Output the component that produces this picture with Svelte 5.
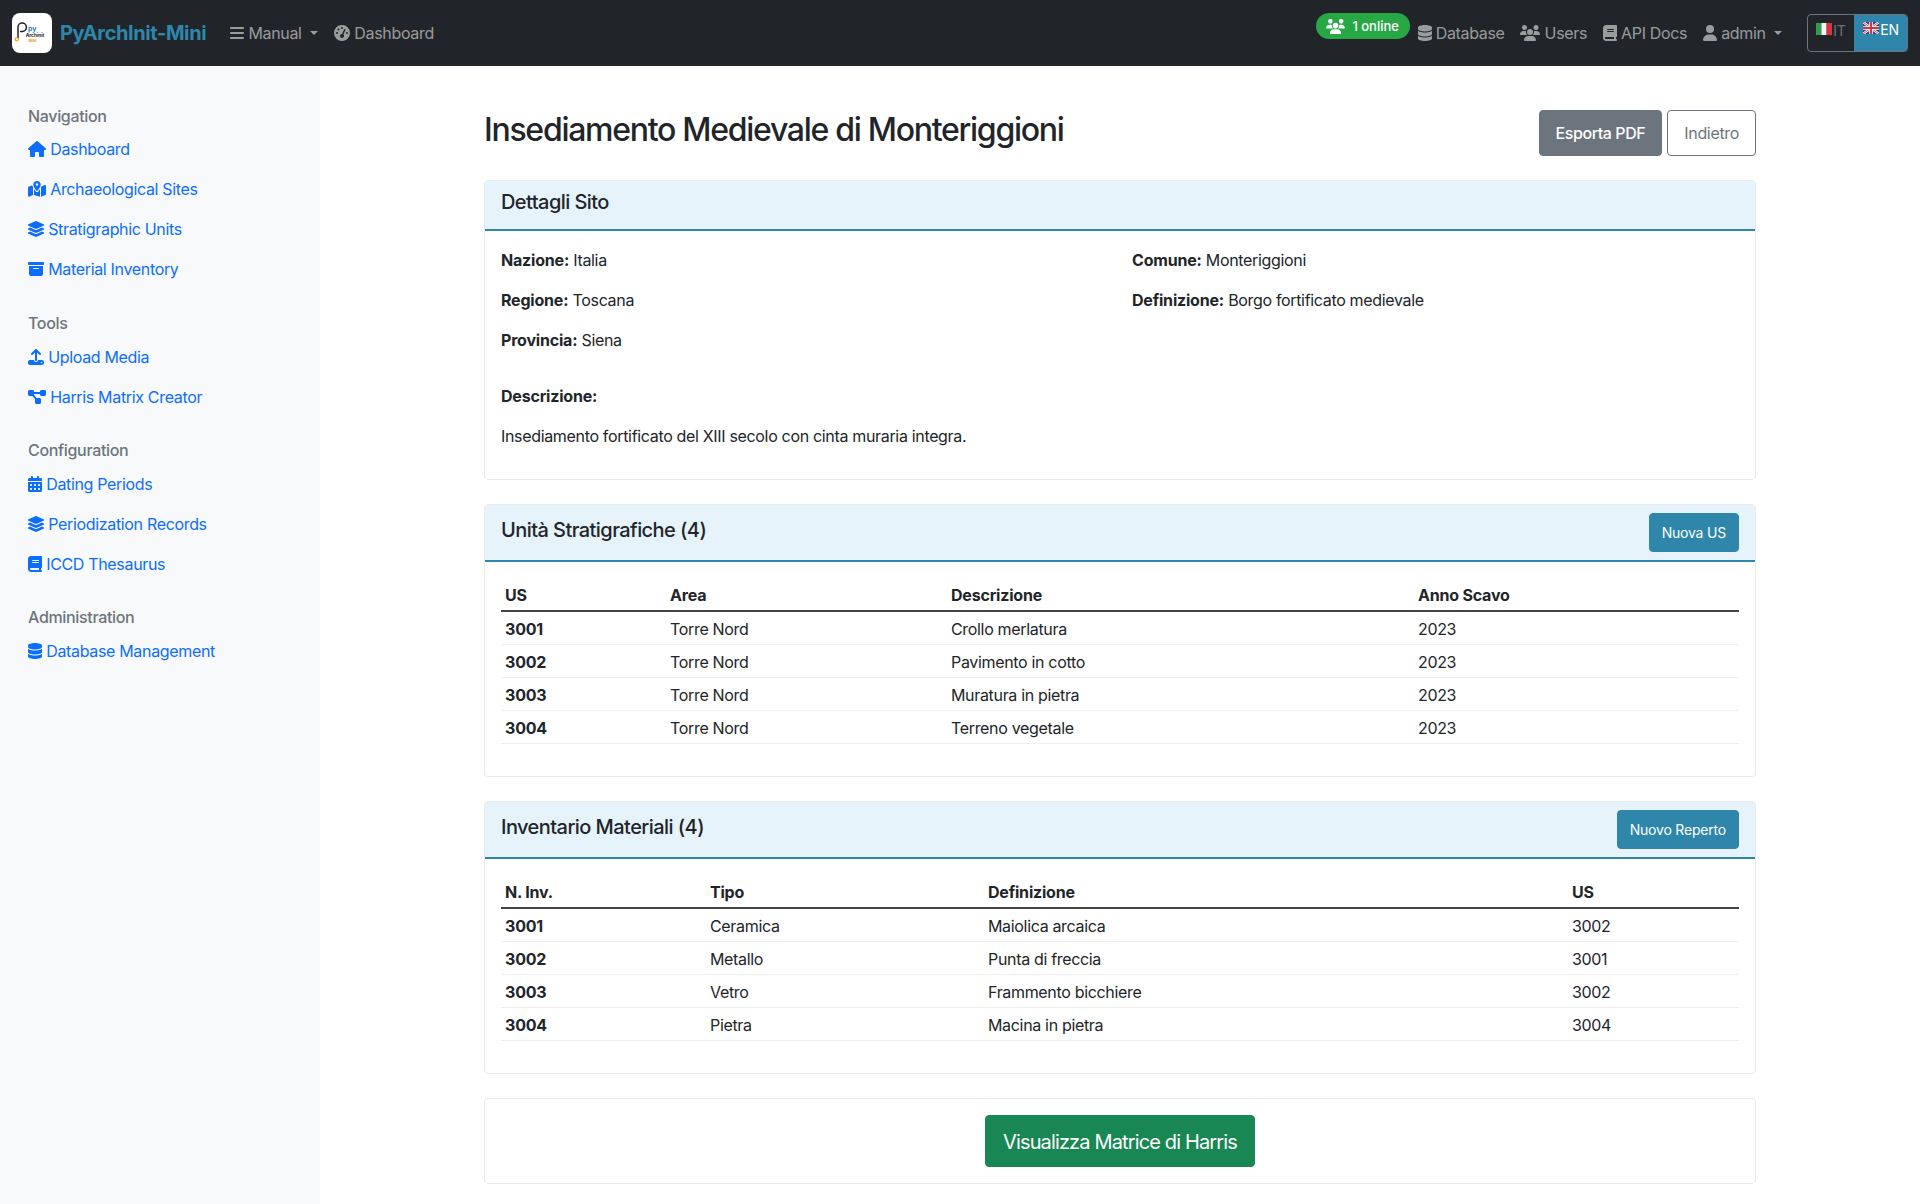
<script>
  const icons = {
    bars: [448, 'M0 96C0 78.3 14.3 64 32 64H416c17.7 0 32 14.3 32 32s-14.3 32-32 32H32C14.3 128 0 113.7 0 96zM0 256c0-17.7 14.3-32 32-32H416c17.7 0 32 14.3 32 32s-14.3 32-32 32H32c-17.7 0-32-14.3-32-32zM448 416c0 17.7-14.3 32-32 32H32c-17.7 0-32-14.3-32-32s14.3-32 32-32H416c17.7 0 32 14.3 32 32z'],
    gauge: [512, 'M0 256a256 256 0 1 1 512 0A256 256 0 1 1 0 256zM288 96a32 32 0 1 0 -64 0 32 32 0 1 0 64 0zM256 416c35.3 0 64-28.7 64-64c0-17.4-6.9-33.1-18.1-44.6L366 161.7c5.3-12.1-.2-26.3-12.3-31.6s-26.3 .2-31.6 12.3L257.9 288c-.6 0-1.3 0-1.9 0c-35.3 0-64 28.7-64 64s28.7 64 64 64zM176 144a32 32 0 1 0 -64 0 32 32 0 1 0 64 0zM96 288a32 32 0 1 0 0-64 32 32 0 1 0 0 64zm352-32a32 32 0 1 0 -64 0 32 32 0 1 0 64 0z'],
    house: [576, 'M575.8 255.5c0 18-15 32.1-32 32.1h-32l.7 160.2c0 2.7-.2 5.4-.5 8.1V472c0 22.1-17.9 40-40 40H456c-1.1 0-2.2 0-3.3-.1c-1.4 .1-2.8 .1-4.2 .1H416 392c-22.1 0-40-17.9-40-40V448 384c0-17.7-14.3-32-32-32H256c-17.7 0-32 14.3-32 32v64 24c0 22.1-17.9 40-40 40H160 128.1c-1.5 0-3-.1-4.5-.2c-1.2 .1-2.4 .2-3.6 .2H104c-22.1 0-40-17.9-40-40V360c0-.9 0-1.9 .1-2.8V287.6H32c-18 0-32-14-32-32.1c0-9 3-17 10-24L266.4 8c7-7 15-8 22-8s15 2 21 7L564.8 231.5c8 7 12 15 11 24z'],
    map: [576, 'M408 120c0 54.6-73.1 151.9-105.2 192c-7.7 9.6-22 9.6-29.6 0C241.1 271.9 168 174.6 168 120C168 53.7 221.7 0 288 0s120 53.7 120 120zm8 80.4c3.5-6.9 6.7-13.8 9.6-20.6c.5-1.2 1-2.5 1.5-3.7l116-46.4C558.9 123.4 576 135 576 152V422.8c0 9.8-6 18.6-15.1 22.3L416 503V200.4zM137.6 138.3c2.4 14.1 7.2 28.3 12.8 41.5c2.9 6.8 6.1 13.7 9.6 20.6V451.8L32.9 502.7C17.1 509 0 497.4 0 480.4V209.6c0-9.8 6-18.6 15.1-22.3l122.6-49zM327.8 332c13.9-17.4 35.7-45.7 56.2-77V504.3L192 449.4V255c20.5 31.3 42.3 59.6 56.2 77c20.5 25.6 59.1 25.6 79.6 0zM288 152a40 40 0 1 0 0-80 40 40 0 1 0 0 80z'],
    layers: [512, 'M264.5 5.2c14.9-6.9 32.1-6.9 47 0l218.6 101c8.5 3.9 13.9 12.4 13.9 21.8s-5.4 17.9-13.9 21.8l-218.6 101c-14.9 6.9-32.1 6.9-47 0L45.9 149.8C37.4 145.8 32 137.3 32 128s5.4-17.9 13.9-21.8L264.5 5.2zM476.9 209.6l53.2 24.6c8.5 3.9 13.9 12.4 13.9 21.8s-5.4 17.9-13.9 21.8l-218.6 101c-14.9 6.9-32.1 6.9-47 0L45.9 277.8C37.4 273.8 32 265.3 32 256s5.4-17.9 13.9-21.8l53.2-24.6 152 70.2c23.4 10.8 50.4 10.8 73.8 0l152-70.2zm-152 198.2l152-70.2 53.2 24.6c8.5 3.9 13.9 12.4 13.9 21.8s-5.4 17.9-13.9 21.8l-218.6 101c-14.9 6.9-32.1 6.9-47 0L45.9 405.8C37.4 401.8 32 393.3 32 384s5.4-17.9 13.9-21.8l53.2-24.6 152 70.2c23.4 10.8 50.4 10.8 73.8 0z', 32],
    archive: [512, 'M32 32H480c17.7 0 32 14.3 32 32V96c0 17.7-14.3 32-32 32H32C14.3 128 0 113.7 0 96V64C0 46.3 14.3 32 32 32zm0 128H480V416c0 35.3-28.7 64-64 64H96c-35.3 0-64-28.7-64-64V160zm128 80c0 8.8 7.2 16 16 16H336c8.8 0 16-7.2 16-16s-7.2-16-16-16H176c-8.8 0-16 7.2-16 16z'],
    upload: [512, 'M288 109.3V352c0 17.7-14.3 32-32 32s-32-14.3-32-32V109.3l-73.4 73.4c-12.5 12.5-32.8 12.5-45.3 0s-12.5-32.8 0-45.3l128-128c12.5-12.5 32.8-12.5 45.3 0l128 128c12.5 12.5 12.5 32.8 0 45.3s-32.8 12.5-45.3 0L288 109.3zM64 352H192c0 35.3 28.7 64 64 64s64-28.7 64-64H448c35.3 0 64 28.7 64 64v32c0 35.3-28.7 64-64 64H64c-35.3 0-64-28.7-64-64V416c0-35.3 28.7-64 64-64zM432 456a24 24 0 1 0 0-48 24 24 0 1 0 0 48z'],
    diagram: [576, 'M0 80C0 53.5 21.5 32 48 32h96c26.5 0 48 21.5 48 48V96H384V80c0-26.5 21.5-48 48-48h96c26.5 0 48 21.5 48 48v96c0 26.5-21.5 48-48 48H432c-26.5 0-48-21.5-48-48V160H192v16c0 1.7-.1 3.4-.3 5L272 288h96c26.5 0 48 21.5 48 48v96c0 26.5-21.5 48-48 48H272c-26.5 0-48-21.5-48-48V336c0-1.7 .1-3.4 .3-5L144 224H48c-26.5 0-48-21.5-48-48V80z'],
    calendar: [448, 'M128 0c17.7 0 32 14.3 32 32V64H288V32c0-17.7 14.3-32 32-32s32 14.3 32 32V64h48c26.5 0 48 21.5 48 48v48H0V112C0 85.5 21.5 64 48 64H96V32c0-17.7 14.3-32 32-32zM0 192H448V464c0 26.5-21.5 48-48 48H48c-26.5 0-48-21.5-48-48V192zm64 80v32c0 8.8 7.2 16 16 16h32c8.8 0 16-7.2 16-16V272c0-8.8-7.2-16-16-16H80c-8.8 0-16 7.2-16 16zm128 0v32c0 8.8 7.2 16 16 16h32c8.8 0 16-7.2 16-16V272c0-8.8-7.2-16-16-16H208c-8.8 0-16 7.2-16 16zm144-16c-8.8 0-16 7.2-16 16v32c0 8.8 7.2 16 16 16h32c8.8 0 16-7.2 16-16V272c0-8.8-7.2-16-16-16H336zM64 400v32c0 8.8 7.2 16 16 16h32c8.8 0 16-7.2 16-16V400c0-8.8-7.2-16-16-16H80c-8.8 0-16 7.2-16 16zm144-16c-8.8 0-16 7.2-16 16v32c0 8.8 7.2 16 16 16h32c8.8 0 16-7.2 16-16V400c0-8.8-7.2-16-16-16H208zm112 16v32c0 8.8 7.2 16 16 16h32c8.8 0 16-7.2 16-16V400c0-8.8-7.2-16-16-16H336c-8.8 0-16 7.2-16 16z'],
    book: [448, 'M96 0C43 0 0 43 0 96V416c0 53 43 96 96 96H384h32c17.7 0 32-14.3 32-32s-14.3-32-32-32V384c17.7 0 32-14.3 32-32V32c0-17.7-14.3-32-32-32H384 96zm0 384H352v64H96c-17.7 0-32-14.3-32-32s14.3-32 32-32zm32-240c0-8.8 7.2-16 16-16H336c8.8 0 16 7.2 16 16s-7.2 16-16 16H144c-8.8 0-16-7.2-16-16zm16 48H336c8.8 0 16 7.2 16 16s-7.2 16-16 16H144c-8.8 0-16-7.2-16-16s7.2-16 16-16z'],
    database: [448, 'M448 80v48c0 44.2-100.3 80-224 80S0 172.2 0 128V80C0 35.8 100.3 0 224 0S448 35.8 448 80zM393.2 214.7c20.8-7.4 39.9-16.9 54.8-28.6V288c0 44.2-100.3 80-224 80S0 332.2 0 288V186.1c14.9 11.8 34 21.2 54.8 28.6C99.7 230.7 159.5 240 224 240s124.3-9.3 169.2-25.3zM0 346.1c14.9 11.8 34 21.2 54.8 28.6C99.7 390.7 159.5 400 224 400s124.3-9.3 169.2-25.3c20.8-7.4 39.9-16.9 54.8-28.6V432c0 44.2-100.3 80-224 80S0 476.2 0 432V346.1z'],
    users: [640, 'M144 0a80 80 0 1 1 0 160A80 80 0 1 1 144 0zM512 0a80 80 0 1 1 0 160A80 80 0 1 1 512 0zM0 298.7C0 239.8 47.8 192 106.7 192h42.7c15.9 0 31 3.5 44.6 9.7c-1.3 7.2-1.9 14.7-1.9 22.3c0 38.2 16.8 72.5 43.3 96c-.2 0-.4 0-.7 0H21.3C9.6 320 0 310.4 0 298.7zM405.3 320c-.2 0-.4 0-.7 0c26.6-23.5 43.3-57.8 43.3-96c0-7.6-.7-15-1.9-22.3c13.6-6.3 28.7-9.7 44.6-9.7h42.7C592.2 192 640 239.8 640 298.7c0 11.8-9.6 21.3-21.3 21.3H405.3zM224 224a96 96 0 1 1 192 0 96 96 0 1 1 -192 0zM128 485.3C128 411.7 187.7 352 261.3 352H378.7C452.3 352 512 411.7 512 485.3c0 14.7-11.9 26.7-26.7 26.7H154.7c-14.7 0-26.7-11.9-26.7-26.7z'],
    user: [448, 'M224 256A128 128 0 1 0 224 0a128 128 0 1 0 0 256zm-45.7 48C79.8 304 0 383.8 0 482.3C0 498.7 13.3 512 29.7 512H418.3c16.4 0 29.7-13.3 29.7-29.7C448 383.8 368.2 304 269.7 304H178.3z']
  };

  const sideNav = [
    { title: 'Navigation', links: [['house', 'Dashboard'], ['map', 'Archaeological Sites'], ['layers', 'Stratigraphic Units'], ['archive', 'Material Inventory']] },
    { title: 'Tools', links: [['upload', 'Upload Media'], ['diagram', 'Harris Matrix Creator']] },
    { title: 'Configuration', links: [['calendar', 'Dating Periods'], ['layers', 'Periodization Records'], ['book', 'ICCD Thesaurus']] },
    { title: 'Administration', links: [['database', 'Database Management']] }
  ];

  const usRows = [
    ['3001', 'Torre Nord', 'Crollo merlatura', '2023'],
    ['3002', 'Torre Nord', 'Pavimento in cotto', '2023'],
    ['3003', 'Torre Nord', 'Muratura in pietra', '2023'],
    ['3004', 'Torre Nord', 'Terreno vegetale', '2023']
  ];
  const invRows = [
    ['3001', 'Ceramica', 'Maiolica arcaica', '3002'],
    ['3002', 'Metallo', 'Punta di freccia', '3001'],
    ['3003', 'Vetro', 'Frammento bicchiere', '3002'],
    ['3004', 'Pietra', 'Macina in pietra', '3004']
  ];
</script>

{#snippet icon(name)}
  <svg class="fa" viewBox="{icons[name][2] ?? 0} 0 {icons[name][0]} 512" width={icons[name][0] / 32} height="16" aria-hidden="true"><path fill="currentColor" d={icons[name][1]} /></svg>
{/snippet}

{#snippet table(kind, head, rows)}
  <table class="table {kind}">
    <colgroup><col class="c1" /><col class="c2" /><col class="c3" /><col class="c4" /></colgroup>
    <thead><tr>{#each head as h}<th>{h}</th>{/each}</tr></thead>
    <tbody>
      {#each rows as r}
        <tr><td><strong>{r[0]}</strong></td><td>{r[1]}</td><td>{r[2]}</td><td>{r[3]}</td></tr>
      {/each}
    </tbody>
  </table>
{/snippet}

<nav class="navbar">
  <a class="brand" href="#top">
    <span class="logo">
      <svg viewBox="0 0 40 40" width="40" height="40" aria-hidden="true">
        <path d="M6 25V14.2a4.2 4.2 0 0 1 8.4 0a4.2 4.2 0 0 1-4.2 4.2H8" fill="none" stroke="#222" stroke-width="1.5" />
        <circle cx="4.8" cy="26.3" r="1.6" fill="none" stroke="#f39c12" stroke-width="1.1" />
        <text x="16" y="18" class="l-py">py</text>
        <text x="13.7" y="24" class="l-arch">Archinit</text>
        <text x="16.5" y="28.5" class="l-mini">MINI</text>
      </svg>
    </span>
    <span class="brand-text">PyArchInit-Mini</span>
  </a>
  <div class="nav-left">
    <a class="nav-link" href="#top">{@render icon('bars')} Manual<span class="caret"></span></a>
    <a class="nav-link" href="#top">{@render icon('gauge')} Dashboard</a>
  </div>
  <div class="nav-right">
    <span class="badge">{@render icon('users')}<span>1 online</span></span>
    <a class="nav-link" href="#top">{@render icon('database')} Database</a>
    <a class="nav-link" href="#top">{@render icon('users')} Users</a>
    <a class="nav-link" href="#top">{@render icon('book')} API Docs</a>
    <a class="nav-link" href="#top">{@render icon('user')} admin<span class="caret"></span></a>
    <div class="lang">
      <a class="lang-btn" href="#top">
        <svg class="flag" viewBox="0 0 16 12" width="16" height="12" aria-hidden="true"><rect width="5.4" height="12" fill="#2f9e4f" /><rect x="5.4" width="5.2" height="12" fill="#f4f4f4" /><rect x="10.6" width="5.4" height="12" fill="#d8343f" /></svg>IT
      </a>
      <a class="lang-btn active" href="#top">
        <svg class="flag" viewBox="0 0 16 12" width="16" height="12" aria-hidden="true"><rect width="16" height="12" fill="#27408f" /><path d="M0 0L16 12M16 0L0 12" stroke="#fff" stroke-width="2.4" /><path d="M0 0L16 12M16 0L0 12" stroke="#d8343f" stroke-width=".9" /><path d="M8 0V12M0 6H16" stroke="#fff" stroke-width="3.6" /><path d="M8 0V12M0 6H16" stroke="#d8343f" stroke-width="2" /></svg>EN
      </a>
    </div>
  </div>
</nav>

<div class="layout">
  <aside class="sidebar">
    {#each sideNav as group}
      <section class="side-group">
        <h6>{group.title}</h6>
        {#each group.links as [ic, label]}
          <a class="side-link" href="#top">{@render icon(ic)} {label}</a>
        {/each}
      </section>
    {/each}
  </aside>

  <main class="main">
    <div class="page-head">
      <h1>Insediamento Medievale di Monteriggioni</h1>
      <div class="head-actions">
        <a class="btn btn-secondary" href="#top">Esporta PDF</a>
        <a class="btn btn-outline" href="#top">Indietro</a>
      </div>
    </div>

    <div class="card">
      <div class="card-header"><h5>Dettagli Sito</h5></div>
      <div class="card-body">
        <div class="details">
          <div>
            <p><strong>Nazione:</strong> Italia</p>
            <p><strong>Regione:</strong> Toscana</p>
            <p><strong>Provincia:</strong> Siena</p>
          </div>
          <div>
            <p><strong>Comune:</strong> Monteriggioni</p>
            <p><strong>Definizione:</strong> Borgo fortificato medievale</p>
          </div>
        </div>
        <div class="description">
          <p><strong>Descrizione:</strong></p>
          <p>Insediamento fortificato del XIII secolo con cinta muraria integra.</p>
        </div>
      </div>
    </div>

    <div class="card">
      <div class="card-header with-action">
        <h5>Unità Stratigrafiche (4)</h5>
        <a class="btn-sm" href="#top">Nuova US</a>
      </div>
      <div class="card-body">
        {@render table('us', ['US', 'Area', 'Descrizione', 'Anno Scavo'], usRows)}
      </div>
    </div>

    <div class="card">
      <div class="card-header with-action">
        <h5>Inventario Materiali (4)</h5>
        <a class="btn-sm" href="#top">Nuovo Reperto</a>
      </div>
      <div class="card-body">
        {@render table('inv', ['N. Inv.', 'Tipo', 'Definizione', 'US'], invRows)}
      </div>
    </div>

    <div class="card last">
      <div class="card-body center">
        <a class="btn-lg" href="#top">Visualizza Matrice di Harris</a>
      </div>
    </div>
  </main>
</div>

<style>
  :global(body) { margin: 0; font-family: Inter, "Liberation Sans", sans-serif; font-size: 16px; line-height: 1.5; letter-spacing: -0.33px; color: #212529; background: #fff; }
  a { text-decoration: none; }
  strong { letter-spacing: -0.2px; }
  .fa { vertical-align: -0.125em; display: inline-block; }

  .navbar { height: 66px; box-sizing: border-box; background: #212529; display: flex; align-items: center; padding: 0 12px; }
  .brand { display: flex; align-items: center; margin-right: 16px; }
  .logo { width: 40px; height: 40px; background: #fff; border-radius: 8px; margin-right: 8px; display: block; overflow: hidden; }
  .logo svg { display: block; }
  .l-py { font: 700 7px Inter, sans-serif; fill: #2e86ab; letter-spacing: 0; }
  .l-arch { font: 700 4.8px Inter, sans-serif; fill: #222; letter-spacing: 0; }
  .l-mini { font: 700 3.6px Inter, sans-serif; fill: #f39c12; letter-spacing: 0; }
  .brand-text { font-size: 20px; font-weight: 700; color: #2e86ab; line-height: 30px; letter-spacing: -0.4px; }
  .nav-left { display: flex; }
  .nav-right { display: flex; align-items: center; margin-left: auto; }
  .nav-link { color: rgba(255, 255, 255, 0.55); padding: 8px; line-height: 24px; display: block; white-space: nowrap; }
  .nav-right .nav-link { letter-spacing: -0.36px; }
  .caret { display: inline-block; margin-left: 8.5px; vertical-align: 0.255em; border-top: 0.3em solid; border-right: 0.3em solid transparent; border-left: 0.3em solid transparent; }
  .badge { background: #28a745; color: #fff; border-radius: 13px; height: 26px; box-sizing: border-box; width: 94px; margin-bottom: 14px; padding-top: 1px; display: flex; align-items: center; justify-content: center; gap: 7px; font-size: 13px; font-weight: 500; letter-spacing: 0; }
  .badge .fa { width: 19px; height: 15px; }
  .lang { display: flex; margin-left: 17px; height: 38px; box-sizing: border-box; border: 1px solid #6c757d; border-radius: 4px; overflow: hidden; }
  .lang-btn { width: 46px; color: #6c757d; font-size: 14px; line-height: 21px; padding-top: 5px; display: flex; align-items: flex-start; justify-content: center; box-sizing: border-box; letter-spacing: -0.2px; }
  .lang-btn.active { width: 54px; margin: -1px -1px -1px 0; height: 38px; background: #2e86ab; color: #fff; }
  .flag { margin: 3px 1px 0 0; }

  .layout { display: flex; min-height: 1138px; }
  .sidebar { width: 320px; flex: none; background: #f8f9fa; padding: 41px 28px 0; box-sizing: border-box; }
  .side-group { margin-bottom: 24px; }
  .side-group:first-child { margin-bottom: 25px; }
  .side-group:first-child h6 { margin-bottom: 3px; }
  .side-group h6 { margin: 0 0 4px; font-size: 16px; font-weight: 500; line-height: 19px; color: #6c757d; }
  .side-link { display: block; padding: 8px 0; color: #0d6efd; line-height: 24px; white-space: nowrap; }

  .main { flex: 1; min-width: 0; padding: 44px 164px 20px; box-sizing: border-box; }
  .page-head { display: flex; justify-content: space-between; align-items: center; margin-bottom: 24px; }
  h1 { margin: 1px 0 7px; font-size: 32px; font-weight: 500; line-height: 38.4px; letter-spacing: -1.28px; }
  .head-actions { display: flex; gap: 5px; }
  .btn { display: block; border: 1px solid #6c757d; border-radius: 4px; padding: 10px 16px; line-height: 24px; font-weight: 500; }
  .btn-secondary { background: #6c757d; color: #fff; letter-spacing: -0.42px; }
  .btn-outline { color: #6c757d; background: #fff; font-weight: 400; }

  .card { border: 1px solid #e8eaec; border-radius: 4px; margin-bottom: 24px; background: #fff; }
  .card.last { margin-bottom: 0; }
  .card-header { background: #e6f3fb; border-bottom: 2px solid #2e86ab; padding: 8px 16px; border-radius: 3px 3px 0 0; }
  .card-header h5 { margin: 1px 0 7px; font-size: 20px; font-weight: 500; line-height: 24px; letter-spacing: -0.56px; }
  .with-action { display: flex; justify-content: space-between; align-items: center; }
  .btn-sm { display: block; background: #2e86ab; color: #fff; border: 1px solid #2e86ab; border-radius: 4px; font-size: 14px; line-height: 21px; padding: 8px 12px; font-weight: 400; letter-spacing: -0.2px; }
  .card-body { padding: 16px; }
  .card-body.center { display: flex; justify-content: center; }
  .btn-lg { display: block; background: #198754; color: #fff; border: 1px solid #198754; border-radius: 4px; font-size: 20px; line-height: 30px; padding: 11px 17px 9px; font-weight: 400; letter-spacing: -0.86px; }

  .details { display: grid; grid-template-columns: 631px 1fr; }
  p { margin: 0 0 15px; padding-top: 1px; }
  .description { margin-top: 16px; }

  .table { width: 100%; table-layout: fixed; border-collapse: collapse; margin-bottom: 16px; }
  .table th { text-align: left; padding: 5px 4px 3px; font-weight: 700; line-height: 24px; letter-spacing: -0.2px; border-bottom: 2px solid #444; }
  .table td { padding: 5px 4px 3px; line-height: 24px; border-bottom: 1px solid #eee; }
  .us .c1 { width: 165px; }
  .us .c2 { width: 281px; }
  .us .c3 { width: 467px; }
  .inv .c1 { width: 205px; }
  .inv .c2 { width: 278px; }
  .inv .c3 { width: 584px; }
</style>
